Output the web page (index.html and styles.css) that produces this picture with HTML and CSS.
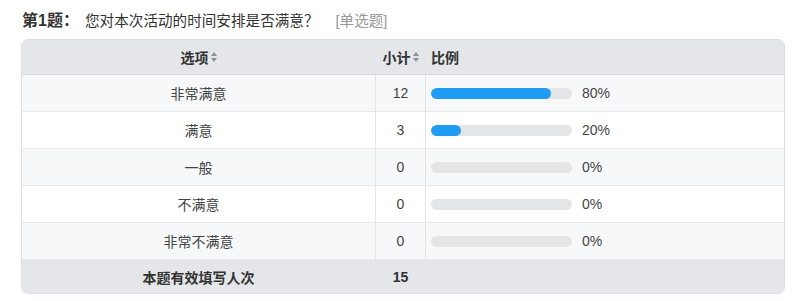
FILE: index.html
```html
<!DOCTYPE html>
<html lang="zh">
<head>
<meta charset="utf-8">
<link rel="stylesheet" href="styles.css">
</head>
<body>
<div class="page">
  <div class="title">
    <span class="qno">第1题：</span>
    <span class="qtext">您对本次活动的时间安排是否满意？</span>
    <span class="qtype">[单选题]</span>
  </div>
  <div class="table">
    <div class="row head">
      <div class="c opt">选项<span class="sort"></span></div>
      <div class="c cnt">小计<span class="sort"></span></div>
      <div class="c ratio left">比例</div>
    </div>
    <div class="row odd">
      <div class="c opt">非常满意</div>
      <div class="c cnt num">12</div>
      <div class="c ratio"><div class="bar"><div class="fill" style="width:120px"></div></div><span class="pct">80%</span></div>
    </div>
    <div class="row">
      <div class="c opt">满意</div>
      <div class="c cnt num">3</div>
      <div class="c ratio"><div class="bar"><div class="fill" style="width:30px"></div></div><span class="pct">20%</span></div>
    </div>
    <div class="row odd">
      <div class="c opt">一般</div>
      <div class="c cnt num">0</div>
      <div class="c ratio"><div class="bar"></div><span class="pct">0%</span></div>
    </div>
    <div class="row">
      <div class="c opt">不满意</div>
      <div class="c cnt num">0</div>
      <div class="c ratio"><div class="bar"></div><span class="pct">0%</span></div>
    </div>
    <div class="row odd">
      <div class="c opt">非常不满意</div>
      <div class="c cnt num">0</div>
      <div class="c ratio"><div class="bar"></div><span class="pct">0%</span></div>
    </div>
    <div class="row foot">
      <div class="c opt">本题有效填写人次</div>
      <div class="c cnt num">15</div>
      <div class="c ratio"></div>
    </div>
  </div>
</div>
</body>
</html>
```

FILE: styles.css
```css
* { box-sizing: border-box; }
html, body { margin: 0; padding: 0; background: #fff; }
body {
  font-family: "Liberation Sans", "Noto Sans CJK SC", sans-serif;
  color: #444;
  font-size: 14px;
}
.page { padding: 10px 16px 0 21px; }
.title {
  display: flex;
  align-items: baseline;
  height: 22px;
  line-height: 22px;
  padding-left: 1px;
}
.qno { font-weight: bold; font-size: 16px; color: #333; width: 63px; }
.qtext { font-size: 14.6px; color: #333; }
.qtype { font-size: 14.6px; color: #999; margin-left: 17px; }
.table {
  margin-top: 7px;
  width: 764px;
  border: 1px solid #dcdee2;
  border-radius: 7px;
  overflow: hidden;
}
.row {
  display: grid;
  grid-template-columns: 354px 50px 1fr;
  height: 37px;
  background: #fff;
  border-bottom: 1px solid #e6e8eb;
}
.row.odd { background: #f7f8fa; }
.row.head { height: 35px; background: #e4e6ea; font-weight: bold; color: #333; border-bottom: 1px solid #d8dade; }
.row.foot { height: 33px; background: #e4e6ea; font-weight: bold; color: #333; border-bottom: none; }
.c {
  display: flex;
  align-items: center;
  justify-content: center;
  border-right: 1px solid #e2e4e7;
}
.c.ratio { border-right: none; justify-content: flex-start; padding-left: 5px; }
.num { font-size: 14px; }
.sort {
  display: inline-block;
  width: 6px;
  height: 10px;
  margin-left: 2px;
  position: relative;
}
.sort::before, .sort::after {
  content: "";
  position: absolute;
  left: 0;
  border-left: 3px solid transparent;
  border-right: 3px solid transparent;
}
.sort::before { top: 0; border-bottom: 4px solid #8e9094; }
.sort::after { bottom: 0; border-top: 4px solid #8e9094; }
.bar {
  width: 141px;
  height: 11px;
  border-radius: 6px;
  background: #e4e5e7;
  overflow: hidden;
}
.fill { height: 100%; background: #1f9cf3; border-radius: 6px; }
.pct { margin-left: 10px; font-size: 14px; color: #444; }
```
